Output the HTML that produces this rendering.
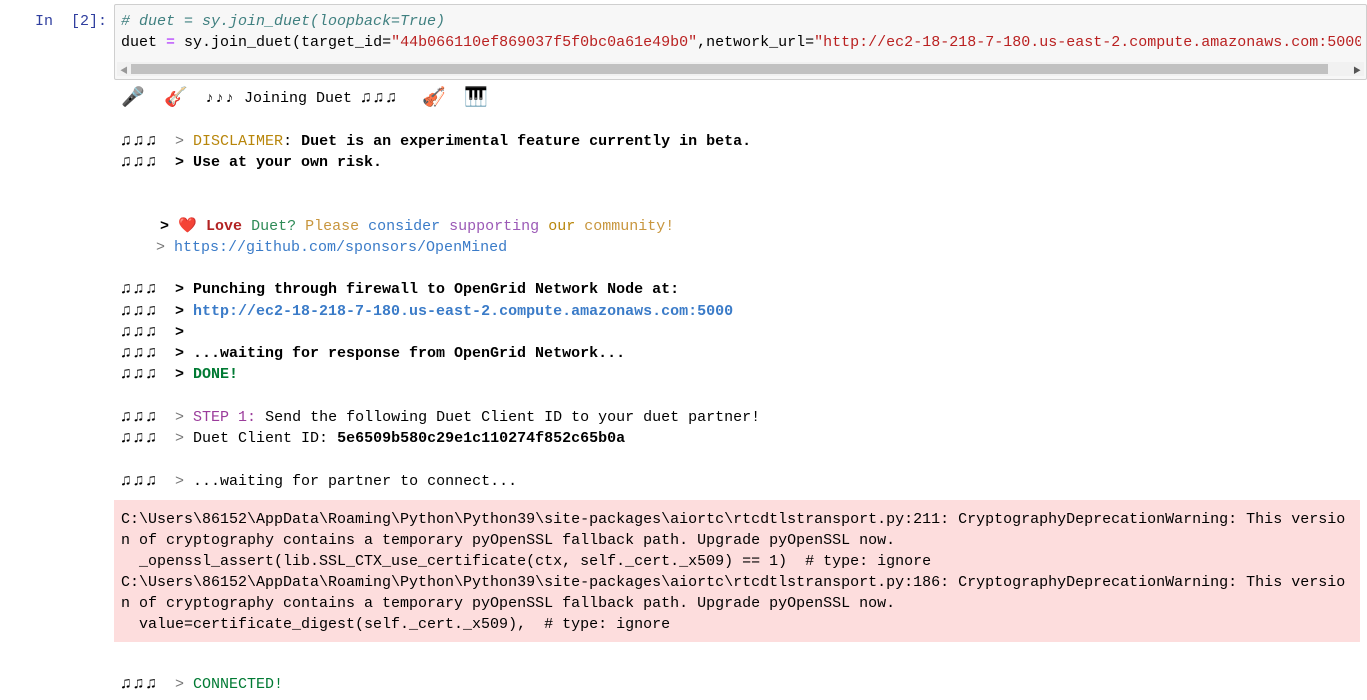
<!DOCTYPE html>
<html><head><meta charset="utf-8"><style>
body{margin:0;background:#fff;width:1367px;height:700px;overflow:hidden;position:relative;font-family:"Liberation Mono","Noto Sans CJK SC",monospace;font-size:15px;color:#000}
.l{position:absolute;left:121px;white-space:pre;line-height:21px;height:21px}
.b{font-weight:bold}
.g{color:#777}
.n{display:inline-block;width:45px;letter-spacing:3px;font-weight:bold;font-size:16px}
.cell{position:absolute;left:114px;top:4px;width:1251px;height:74px;border:1px solid #cfcfcf;background:#f7f7f7;border-radius:2px}
.err{position:absolute;left:114px;top:500px;width:1246px;height:142px;background:#fddddd}
.e{position:absolute;top:86px;font-size:19px;line-height:24px}
</style></head><body>
<div class="l" style="left:35px;top:11px;color:#303f9f">In  [2]:</div>
<div class="cell"></div>
<div class="l" style="top:11px;color:#408080;font-style:italic"># duet = sy.join_duet(loopback=True)</div>
<div class="l" style="top:32px;width:1240px;overflow:hidden">duet <span style="color:#a2f">=</span> sy.join_duet(target_id=<span style="color:#ba2121">"44b066110ef869037f5f0bc0a61e49b0"</span>,network_url=<span style="color:#ba2121">"http://ec2-18-218-7-180.us-east-2.compute.amazonaws.com:5000"</span>)</div>
<div style="position:absolute;left:117px;top:62px;width:1247px;height:14px;background:#f1f1f1"></div>
<div style="position:absolute;left:131px;top:64px;width:1197px;height:10px;background:#c1c1c1"></div>
<div style="position:absolute;left:120px;top:65px;color:#999;font-size:8px">◀</div>
<div style="position:absolute;left:1353px;top:65px;color:#555;font-size:8px">▶</div>
<div class="e" style="left:121px">🎤</div>
<div class="e" style="left:164px">🎸</div>
<div class="l" style="left:205px;top:88px"><span style="letter-spacing:1px">♪♪♪</span> Joining Duet <span style="letter-spacing:3px;font-size:16px">♫♫♫</span></div>
<div class="e" style="left:422px">🎻</div>
<div class="e" style="left:464px">🎹</div>
<div class="l" style="top:131px"><span class="n">♫♫♫</span> <span class="g">&gt;</span> <span style="color:#b8860b">DISCLAIMER</span>: <span class="b">Duet is an experimental feature currently in beta.</span></div>
<div class="l b" style="top:152px"><span class="n">♫♫♫</span> &gt; Use at your own risk.</div>
<div class="l" style="left:160px;top:216px"><span class="b">&gt;</span> <span style="display:inline-block;width:28px">❤️</span><span class="b" style="color:#b22222">Love</span> <span style="color:#2e8b57">Duet?</span> <span style="color:#c8963e">Please</span> <span style="color:#3a7bc8">consider</span> <span style="color:#9b59b6">supporting</span> <span style="color:#b8860b">our</span> <span style="color:#c8963e">community!</span></div>
<div class="l" style="left:156px;top:237px;color:#3a7bc8"><span class="g">&gt;</span> https://github.com/sponsors/OpenMined</div>
<div class="l b" style="top:279px"><span class="n">♫♫♫</span> &gt; Punching through firewall to OpenGrid Network Node at:</div>
<div class="l b" style="top:301px"><span class="n">♫♫♫</span> &gt; <span style="color:#3a7bc8">http://ec2-18-218-7-180.us-east-2.compute.amazonaws.com:5000</span></div>
<div class="l b" style="top:322px"><span class="n">♫♫♫</span> &gt;</div>
<div class="l b" style="top:343px"><span class="n">♫♫♫</span> &gt; ...waiting for response from OpenGrid Network...</div>
<div class="l b" style="top:364px"><span class="n">♫♫♫</span> &gt; <span style="color:#007a33">DONE!</span></div>
<div class="l" style="top:407px"><span class="n">♫♫♫</span> <span class="g">&gt;</span> <span style="color:#9b3c9b">STEP 1:</span> Send the following Duet Client ID to your duet partner!</div>
<div class="l" style="top:428px"><span class="n">♫♫♫</span> <span class="g">&gt;</span> Duet Client ID: <span class="b">5e6509b580c29e1c110274f852c65b0a</span></div>
<div class="l" style="top:471px"><span class="n">♫♫♫</span> <span class="g">&gt;</span> ...waiting for partner to connect...</div>
<div class="err"></div>
<div class="l" style="top:509px">C:\Users\86152\AppData\Roaming\Python\Python39\site-packages\aiortc\rtcdtlstransport.py:211: CryptographyDeprecationWarning: This versio</div>
<div class="l" style="top:530px">n of cryptography contains a temporary pyOpenSSL fallback path. Upgrade pyOpenSSL now.</div>
<div class="l" style="top:551px">  _openssl_assert(lib.SSL_CTX_use_certificate(ctx, self._cert._x509) == 1)  # type: ignore</div>
<div class="l" style="top:572px">C:\Users\86152\AppData\Roaming\Python\Python39\site-packages\aiortc\rtcdtlstransport.py:186: CryptographyDeprecationWarning: This versio</div>
<div class="l" style="top:593px">n of cryptography contains a temporary pyOpenSSL fallback path. Upgrade pyOpenSSL now.</div>
<div class="l" style="top:614px">  value=certificate_digest(self._cert._x509),  # type: ignore</div>
<div class="l" style="top:674px"><span class="n">♫♫♫</span> <span class="g">&gt;</span> <span style="color:#007a33">CONNECTED!</span></div>
</body></html>
